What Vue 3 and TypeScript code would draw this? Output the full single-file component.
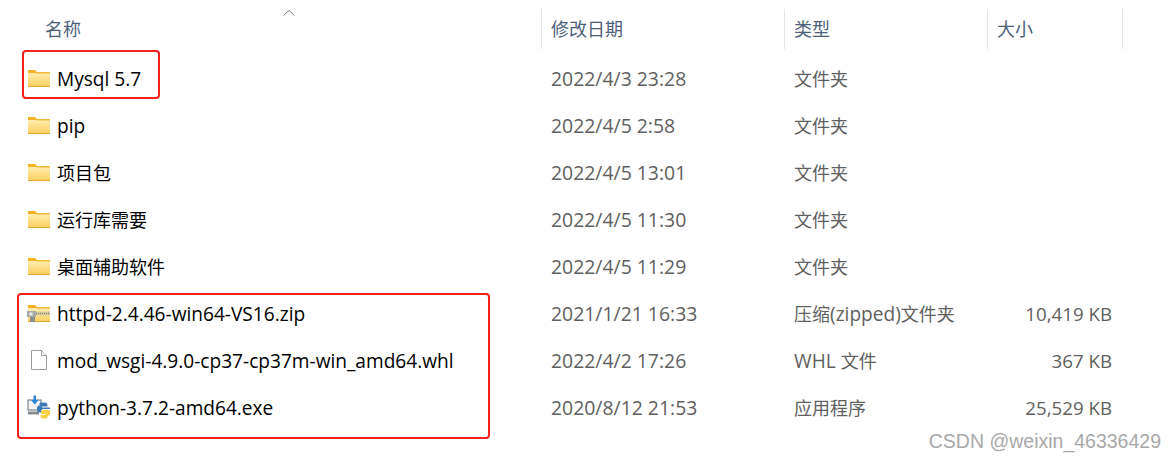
<script setup lang="ts">
type Kind = "folder" | "zip" | "file" | "exe";

interface Row {
  name: string;
  date: string;
  type: string;
  size: string;
  kind: Kind;
}

const rows: Row[] = [
  { name: "Mysql 5.7", date: "2022/4/3 23:28", type: "文件夹", size: "", kind: "folder" },
  { name: "pip", date: "2022/4/5 2:58", type: "文件夹", size: "", kind: "folder" },
  { name: "项目包", date: "2022/4/5 13:01", type: "文件夹", size: "", kind: "folder" },
  { name: "运行库需要", date: "2022/4/5 11:30", type: "文件夹", size: "", kind: "folder" },
  { name: "桌面辅助软件", date: "2022/4/5 11:29", type: "文件夹", size: "", kind: "folder" },
  { name: "httpd-2.4.46-win64-VS16.zip", date: "2021/1/21 16:33", type: "压缩(zipped)文件夹", size: "10,419 KB", kind: "zip" },
  { name: "mod_wsgi-4.9.0-cp37-cp37m-win_amd64.whl", date: "2022/4/2 17:26", type: "WHL 文件", size: "367 KB", kind: "file" },
  { name: "python-3.7.2-amd64.exe", date: "2020/8/12 21:53", type: "应用程序", size: "25,529 KB", kind: "exe" },
];

const headers = ["名称", "修改日期", "类型", "大小"];

// latin runs are drawn a bit larger than the CJK ones, as in the original
const parts = (text: string) => text.split(/([\x00-\x7f]+)/).filter(Boolean);
const hasLatin = (text: string) => /[\x00-\x7f]/.test(text);
</script>

<template>
  <div class="page">
    <div class="list">
      <div class="head">
        <div v-for="h in headers" :key="h" class="head-cell">{{ h }}</div>
        <svg class="sort" width="14" height="8" viewBox="0 0 14 8">
          <path d="M1.5 6.5 7 1.5l5.5 5" fill="none" stroke="#7d7d7d" stroke-width="1" />
        </svg>
      </div>

      <div v-for="row in rows" :key="row.name" class="row">
        <div class="name">
          <svg class="icon" width="24" height="20" viewBox="0 0 24 20">
            <defs>
              <linearGradient id="fold" x1="0" y1="0" x2="0" y2="1">
                <stop offset="0" stop-color="#ffedb0" />
                <stop offset="1" stop-color="#fccf5c" />
              </linearGradient>
            </defs>

            <template v-if="row.kind === 'folder'">
              <path d="M1 2h7l2 2v3H1z" fill="#f5b324" />
              <rect x="1" y="5" width="22" height="14" fill="url(#fold)" />
              <rect x="1" y="18" width="22" height="1" fill="#e4a82e" />
              <rect x="10" y="4" width="13" height="1.500" fill="#f0b93c" />
            </template>

            <template v-else-if="row.kind === 'zip'">
              <path d="M1 2h7l2 2v3H1z" fill="#f5b324" />
              <rect x="1" y="5" width="22" height="14" fill="url(#fold)" />
              <rect x="1" y="18" width="22" height="1" fill="#e4a82e" />
              <rect x="10" y="4" width="13" height="1.500" fill="#f0b93c" />
              <rect x="9" y="8.500" width="14" height="4" fill="#d8cfa8" />
              <path d="M9 10.500h14" stroke="#8a8468" stroke-width="1.500" stroke-dasharray="1 1" />
              <rect x="0" y="8" width="9" height="6" fill="#a8aaa8" />
              <rect x="2.500" y="9.500" width="3" height="3" fill="#ececec" />
              <rect x="3" y="14" width="5" height="5" fill="#8d8f8e" />
            </template>

            <template v-else-if="row.kind === 'file'">
              <path d="M4.500 .5h10l5 5v14h-15z" fill="#fff" stroke="#9a9a9a" />
              <path d="M14.500 .5v5h5" fill="#f4f4f4" stroke="#9a9a9a" />
            </template>

            <template v-else>
              <rect x="1" y="3" width="13" height="10" fill="#f4f4f4" stroke="#66727a" />
              <rect x="1" y="14.500" width="11" height="3" fill="#87898b" />
              <path d="M6.500 -1.500h2.500v4.500h2.500L7.800 7.500 4 3h2.500z" fill="#2c86d8" />
              <path d="M15 5.500h2.500c1.800 0 3 1 3 2.500v1.500H15v1h7c.6 0 1 .4 1 1v.5h-6.500c-1.500 0-2.500 1-2.500 2.500v1h-1.500c-1.500 0-2.500-1-2.500-2.500V11c0-1.500 1-2.500 2.500-2.500V7c0-1 .5-1.500 1.500-1.500z" fill="#3d7cb4" />
              <path d="M16.500 13h5c1 0 1.500 .5 1.500 1.500v2c0 1.500-1 2.500-2.500 2.500v1c0 1-.8 1.500-2 1.500H16c-1.500 0-2.500-1-2.500-2.500V18h5v-1H14v-1.500c0-1.500 1-2.500 2.500-2.500z" fill="#fdd044" />
            </template>
          </svg>
          <span :class="{ low: hasLatin(row.name) }">
            <span v-for="(p, i) in parts(row.name)" :key="i" :class="{ lat: hasLatin(p) }">{{ p }}</span>
          </span>
        </div>
        <div class="cell date low">{{ row.date }}</div>
        <div class="cell" :class="{ low: hasLatin(row.type) }">
          <span v-for="(p, i) in parts(row.type)" :key="i" :class="{ lat: hasLatin(p) }">{{ p }}</span>
        </div>
        <div class="cell size low">{{ row.size }}</div>
      </div>
    </div>

    <div class="mark mark-one"></div>
    <div class="mark mark-two"></div>
    <div class="watermark">CSDN @weixin_46336429</div>
  </div>
</template>

<style scoped>
.page {
  position: relative;
  width: 1176px;
  height: 459px;
  background: #fff;
  overflow: hidden;
  font-family: "Open Sans", "Noto Sans CJK SC", sans-serif;
  font-size: 18px;
}

.list {
  padding-top: 9px;
}

.head,
.row {
  display: grid;
  grid-template-columns: 542px 243px 203px 135px;
}

.head {
  position: relative;
  height: 40px;
  margin-bottom: 5px;
  color: #4c607a;
}

.head-cell {
  display: flex;
  align-items: center;
  padding-left: 9px;
  padding-bottom: 2px;
  border-right: 1px solid #e5e5e5;
}

.head-cell:first-child {
  padding-left: 45px;
}

.sort {
  position: absolute;
  left: 282px;
  top: 0;
}

.row {
  height: 47px;
  align-items: center;
}

.name {
  display: flex;
  align-items: center;
  gap: 6px;
  padding-left: 27px;
  color: #000;
}

.icon {
  flex: none;
  overflow: visible;
}

.lat {
  font-size: 19.1px;
}

.low {
  padding-top: 2px;
}

.cell {
  padding-left: 9px;
  color: #5f5f5f;
}

.date {
  font-size: 19.4px;
}

.size {
  padding-left: 0;
  padding-right: 11px;
  text-align: right;
  font-size: 18.7px;
}

.mark {
  position: absolute;
  border: 2px solid #f5211d;
  border-radius: 4px;
}

.mark-one {
  left: 22px;
  top: 50px;
  width: 134px;
  height: 45px;
}

.mark-two {
  left: 17px;
  top: 293px;
  width: 469px;
  height: 142px;
}

.watermark {
  position: absolute;
  right: 15px;
  top: 430px;
  font-family: "Liberation Sans", sans-serif;
  font-size: 19.5px;
  color: #a8a8a8;
}
</style>
